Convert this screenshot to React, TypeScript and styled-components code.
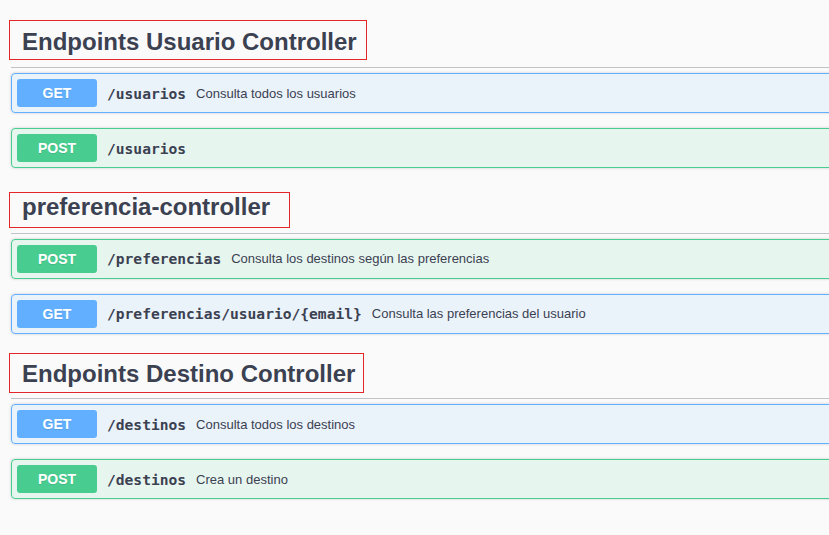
import React from "react";
import styled, { createGlobalStyle } from "styled-components";

const GlobalStyle = createGlobalStyle`
  html, body {
    margin: 0;
    padding: 0;
    background: #fafafa;
    overflow: hidden;
  }
  body {
    font-family: "Liberation Sans", Arial, sans-serif;
    color: #3b4151;
  }
`;

type Method = "GET" | "POST";

const methodColor: Record<Method, string> = {
  GET: "#61affe",
  POST: "#49cc90",
};
const methodBg: Record<Method, string> = {
  GET: "rgba(97, 175, 254, 0.1)",
  POST: "rgba(73, 204, 144, 0.1)",
};

const Page = styled.div`
  width: 900px;
  padding: 17.5px 0 0 11px;
`;

const TagSection = styled.section`
  display: flex;
  flex-direction: column;
`;

const TagHeader = styled.h3`
  margin: 0 0 5px;
  height: 49.5px;
  border-bottom: 1px solid rgba(59, 65, 81, 0.3);
  display: flex;
  align-items: flex-start;
  box-sizing: content-box;
`;

const TagName = styled.span<{ $top: number; $pt: number; $pb: number; $pr: number }>`
  display: inline-block;
  margin-top: ${(p) => p.$top}px;
  margin-left: -2px;
  padding: ${(p) => p.$pt}px ${(p) => p.$pr}px ${(p) => p.$pb}px 12px;
  border: 1px solid #e3262a;
  font-family: "Liberation Sans", Arial, sans-serif;
  font-size: 24px;
  line-height: 28px;
  font-weight: 700;
  color: #3b4151;
  white-space: nowrap;
`;

const OpBlock = styled.div<{ $method: Method }>`
  display: flex;
  align-items: center;
  margin: 0 0 15px;
  padding: 5px;
  height: 28px;
  box-sizing: content-box;
  border: 1px solid ${(p) => methodColor[p.$method]};
  border-radius: 4px;
  background: ${(p) => methodBg[p.$method]};
  box-shadow: 0 0 3px rgba(0, 0, 0, 0.19);
`;

const MethodBadge = styled.span<{ $method: Method }>`
  flex: none;
  width: 80px;
  height: 28px;
  display: flex;
  align-items: center;
  justify-content: center;
  border-radius: 3px;
  background: ${(p) => methodColor[p.$method]};
  color: #fff;
  font-family: "Liberation Sans", Arial, sans-serif;
  font-size: 14px;
  font-weight: 700;
  text-shadow: 0 1px 0 rgba(0, 0, 0, 0.1);
`;

const Path = styled.span`
  padding: 0 10px;
  font-family: "DejaVu Sans Mono", "Liberation Mono", monospace;
  font-size: 14.6px;
  font-weight: 700;
  color: #3b4151;
  white-space: nowrap;
`;

const Description = styled.span`
  font-family: "Liberation Sans", Arial, sans-serif;
  font-size: 13px;
  color: #3b4151;
  white-space: nowrap;
`;

type Op = { method: Method; path: string; desc?: string };
type Tag = { name: string; top: number; pt: number; pb: number; pr: number; ops: Op[] };

const tags: Tag[] = [
  {
    name: "Endpoints Usuario Controller",
    top: 2.5,
    pt: 7,
    pb: 3,
    pr: 9,
    ops: [
      { method: "GET", path: "/usuarios", desc: "Consulta todos los usuarios" },
      { method: "POST", path: "/usuarios" },
    ],
  },
  {
    name: "preferencia-controller",
    top: 9,
    pt: 0,
    pb: 6,
    pr: 19,
    ops: [
      { method: "POST", path: "/preferencias", desc: "Consulta los destinos según las preferencias" },
      { method: "GET", path: "/preferencias/usuario/{email}", desc: "Consulta las preferencias del usuario" },
    ],
  },
  {
    name: "Endpoints Destino Controller",
    top: 4.5,
    pt: 6,
    pb: 4,
    pr: 8,
    ops: [
      { method: "GET", path: "/destinos", desc: "Consulta todos los destinos" },
      { method: "POST", path: "/destinos", desc: "Crea un destino" },
    ],
  },
];

export default function App() {
  return (
    <>
      <GlobalStyle />
      <Page>
        {tags.map((t) => (
          <TagSection key={t.name}>
            <TagHeader>
              <TagName $top={t.top} $pt={t.pt} $pb={t.pb} $pr={t.pr}>
                {t.name}
              </TagName>
            </TagHeader>
            {t.ops.map((o) => (
              <OpBlock key={o.method + o.path} $method={o.method}>
                <MethodBadge $method={o.method}>{o.method}</MethodBadge>
                <Path>{o.path}</Path>
                {o.desc && <Description>{o.desc}</Description>}
              </OpBlock>
            ))}
          </TagSection>
        ))}
      </Page>
    </>
  );
}
